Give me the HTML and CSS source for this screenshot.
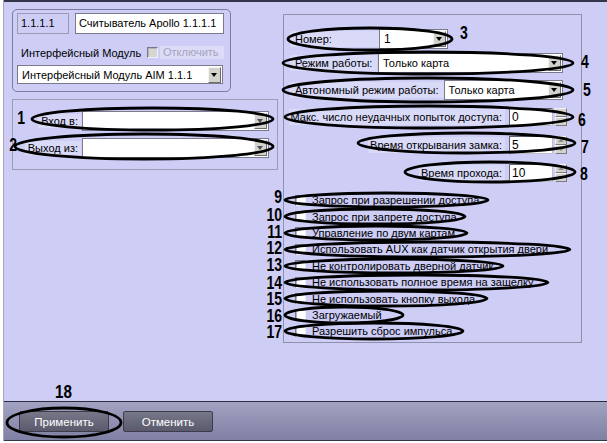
FILE: index.html
```html
<!DOCTYPE html>
<html lang="ru">

<head>
    <meta charset="UTF-8">
    <title>Считыватель Apollo</title>
    <link rel="stylesheet" href="styles.css">
</head>

<body>
    <div class="window">
        <div class="content">
            <div class="left-col">
                <div class="panel reader">
                    <div class="reader-row">
                        <span class="field field-ro">1.1.1.1</span>
                        <span class="field field-name">Считыватель Apollo 1.1.1.1</span>
                    </div>
                    <div class="reader-row module-row">
                        <span class="module-label">Интерфейсный Модуль</span>
                        <span class="check check-off"></span>
                        <span class="disabled-label">Отключить</span>
                    </div>
                    <div class="select module-select">
                        <span class="select-text">Интерфейсный Модуль AIM 1.1.1</span>
                        <span class="drop"></span>
                    </div>
                </div>

                <div class="panel io">
                    <div class="io-row">
                        <span class="io-label"><span class="label-box">Вход в:</span></span>
                        <div class="select io-select"><span class="select-text"></span><span class="drop"></span></div>
                    </div>
                    <div class="io-row">
                        <span class="io-label"><span class="label-box">Выход из:</span></span>
                        <div class="select io-select"><span class="select-text"></span><span class="drop"></span></div>
                    </div>
                </div>
            </div>

            <div class="panel settings">
                <div class="set-row row-number">
                    <span class="label-box number-label">Номер:</span>
                    <div class="select number-select"><span class="select-text">1</span><span class="drop"></span></div>
                </div>
                <div class="set-row row-mode">
                    <span class="label-box">Режим работы:</span>
                    <div class="select mode-select"><span class="select-text">Только карта</span><span class="drop"></span></div>
                </div>
                <div class="set-row row-auto">
                    <span class="label-box">Автономный режим работы:</span>
                    <div class="select auto-select"><span class="select-text">Только карта</span><span class="drop"></span></div>
                </div>

                <div class="num-row row-tries">
                    <span class="label-box">Макс. число неудачных попыток доступа:</span>
                    <span class="spin-field">0</span>
                    <span class="spin"><span class="spin-up"></span><span class="spin-down"></span></span>
                </div>
                <div class="num-row">
                    <span class="label-box">Время открывания замка:</span>
                    <span class="spin-field">5</span>
                    <span class="spin"><span class="spin-up"></span><span class="spin-down"></span></span>
                </div>
                <div class="num-row">
                    <span class="label-box">Время прохода:</span>
                    <span class="spin-field">10</span>
                    <span class="spin"><span class="spin-up"></span><span class="spin-down"></span></span>
                </div>

                <ul class="options">
                    <li><span class="check"></span>Запрос при разрешении доступа</li>
                    <li><span class="check"></span>Запрос при запрете доступа</li>
                    <li><span class="check"></span>Управление по двум картам</li>
                    <li><span class="check"></span>Использовать AUX как датчик открытия двери</li>
                    <li><span class="check"></span>Не контролировать дверной датчик</li>
                    <li><span class="check"></span>Не использовать полное время на защелку</li>
                    <li><span class="check"></span>Не использовать кнопку выхода</li>
                    <li><span class="check"></span>Загружаемый</li>
                    <li><span class="check"></span>Разрешить сброс импульса</li>
                </ul>
            </div>
        </div>

        <div class="footer">
            <button class="btn">Применить</button>
            <button class="btn">Отменить</button>
        </div>
    </div>

    <!-- callout marks drawn over the dialog -->
    <svg class="marks" width="607" height="443" viewBox="0 0 607 443">
        <g class="rings">
            <ellipse cx="152.5" cy="119" rx="120.5" ry="11" />
            <ellipse cx="144" cy="146.5" rx="129" ry="12.5" />
            <ellipse cx="370" cy="39" rx="82" ry="11" />
            <ellipse cx="428" cy="63" rx="145" ry="11" />
            <ellipse cx="428" cy="90" rx="145" ry="12" />
            <ellipse cx="429" cy="117" rx="144" ry="11" />
            <ellipse cx="466.5" cy="143" rx="108.5" ry="10" />
            <ellipse cx="490" cy="172" rx="85" ry="10" />
            <ellipse cx="386.5" cy="200" rx="101.5" ry="7" />
            <ellipse cx="375" cy="216.5" rx="90" ry="7.5" />
            <ellipse cx="376" cy="233" rx="91" ry="7" />
            <ellipse cx="427.5" cy="249.5" rx="142.5" ry="7.5" />
            <ellipse cx="394" cy="266" rx="109" ry="7" />
            <ellipse cx="416.5" cy="282.5" rx="131.5" ry="7.5" />
            <ellipse cx="386" cy="298.5" rx="101" ry="7.5" />
            <ellipse cx="344" cy="315" rx="59" ry="8" />
            <ellipse cx="374" cy="331" rx="89" ry="8" />
            <ellipse cx="64" cy="422.5" rx="57" ry="14.5" />
        </g>
        <g class="nums">
            <text transform="translate(25 124) scale(.78 1)" text-anchor="end">1</text>
            <text transform="translate(17 151) scale(.78 1)" text-anchor="end">2</text>
            <text transform="translate(460 39) scale(.78 1)">3</text>
            <text transform="translate(581 68) scale(.78 1)">4</text>
            <text transform="translate(583 96) scale(.78 1)">5</text>
            <text transform="translate(578 126) scale(.78 1)">6</text>
            <text transform="translate(581 153) scale(.78 1)">7</text>
            <text transform="translate(580 180) scale(.78 1)">8</text>
            <text transform="translate(282 203) scale(.78 1)" text-anchor="end">9</text>
            <text transform="translate(282 221) scale(.78 1)" text-anchor="end">10</text>
            <text transform="translate(282 238) scale(.78 1)" text-anchor="end">11</text>
            <text transform="translate(282 254) scale(.78 1)" text-anchor="end">12</text>
            <text transform="translate(282 271) scale(.78 1)" text-anchor="end">13</text>
            <text transform="translate(282 289) scale(.78 1)" text-anchor="end">14</text>
            <text transform="translate(282 305) scale(.78 1)" text-anchor="end">15</text>
            <text transform="translate(282 322) scale(.78 1)" text-anchor="end">16</text>
            <text transform="translate(282 338) scale(.78 1)" text-anchor="end">17</text>
            <text transform="translate(55 398) scale(.8 1)" class="big">18</text>
        </g>
    </svg>
</body>

</html>
```

FILE: styles.css
```css
* {
    margin: 0;
    padding: 0;
    box-sizing: border-box;
}

body {
    position: relative;
    width: 607px;
    height: 443px;
    overflow: hidden;
    background-color: #fff;
    font-family: "Liberation Sans", Arial, sans-serif;
    font-size: 11px;
    color: #000;
}

.window {
    margin-left: 3px;
    height: 441px;
    border-left: 1px solid #a8a8b4;
    display: flex;
    flex-direction: column;
}

.content {
    height: 401px;
    border-top: 2px solid #34344a;
    background-color: #cdcdf6;
    display: flex;
    padding: 7px 0 0 8px;
}

.left-col {
    width: 266px;
    display: flex;
    flex-direction: column;
    row-gap: 7px;
}

.panel {
    border: 1px solid #9090aa;
}

/* reader card */
.reader {
    width: 219px;
    height: 83px;
    border-color: #7c7c9c;
    border-radius: 5px;
    padding: 3px 0 0 4px;
}

.reader-row {
    display: flex;
    align-items: center;
}

.field {
    height: 21px;
    line-height: 19px;
    padding-left: 3px;
    border: 1px solid #7a7a8c;
    background-color: #fff;
    white-space: nowrap;
    font-size: 11px;
}

.field-ro {
    width: 52px;
    background-color: #cdcdf6;
    border-color: #9a9ab0;
}

.field-name {
    width: 149px;
    margin-left: 6px;
}

.module-row {
    margin-top: 12px;
    height: 13px;
}

.module-label {
    width: 130px;
    padding-left: 4px;
    white-space: nowrap;
}

.check {
    display: inline-block;
    width: 11px;
    height: 11px;
    background-color: #fff;
    border: 1px solid;
    border-color: #78788a #f0f0f8 #f0f0f8 #78788a;
    box-shadow: inset 1px 1px 0 #b4b4c0;
    flex-shrink: 0;
}

.check-off {
    background-color: #d8d6d0;
}

.disabled-label {
    margin-left: 2px;
    width: 64px;
    height: 13px;
    line-height: 13px;
    padding-left: 3px;
    color: #a4a4bc;
    background-color: #dcdcf8;
}

.select {
    display: flex;
    align-items: center;
    height: 20px;
    border: 1px solid #7a7a8c;
    background-color: #fff;
    padding: 1px;
}

.select-text {
    flex: 1;
    padding-left: 3px;
    white-space: nowrap;
    overflow: hidden;
}

.drop {
    position: relative;
    width: 13px;
    height: 16px;
    background-color: #d4d2cc;
    border: 1px solid;
    border-color: #f4f4f4 #6c6c6c #6c6c6c #f4f4f4;
}

.drop::after {
    content: "";
    position: absolute;
    left: 2px;
    top: 5px;
    border-left: 3.5px solid transparent;
    border-right: 3.5px solid transparent;
    border-top: 4px solid #000;
}

.module-select {
    margin-top: 6px;
    width: 206px;
    height: 19px;
}

/* in / out panel */
.io {
    width: 266px;
    height: 71px;
    border-color: #9c9cb4;
    padding-top: 11px;
    display: flex;
    flex-direction: column;
    row-gap: 7px;
}

.io-row {
    display: flex;
    align-items: center;
}

.io-label {
    width: 68px;
    text-align: right;
}

.label-box {
    display: inline-block;
    padding: 1px 3px;
    background-color: #d9d9f8;
    white-space: nowrap;
}

.io-select {
    width: 187px;
    margin-left: 1px;
}

.io-select .drop::after {
    border-top-color: #505058;
}

/* reader settings */
.settings {
    width: 299px;
    height: 329px;
    margin: 5px 0 0 5px;
    padding-top: 14px;
}

.set-row,
.num-row {
    display: flex;
    align-items: center;
    height: 20px;
}

.set-row {
    padding: 0 18px 0 6px;
}

.set-row .label-box {
    padding: 2px 5px;
}

.number-label {
    width: 89px;
}

.number-select {
    width: 69px;
}

.number-select .select-text {
    font-size: 12px;
}

.row-mode {
    margin-top: 4px;
}

.row-auto {
    margin-top: 7px;
}

.mode-select {
    width: 185px;
    margin-left: auto;
}

.auto-select {
    width: 121px;
    margin-left: auto;
}

.num-row {
    justify-content: flex-end;
    padding-right: 14px;
    margin-top: 8px;
}

.row-tries {
    margin-top: 7px;
}

.num-row .label-box {
    padding: 2px 3px 2px 2px;
}

.spin-field {
    width: 44px;
    height: 18px;
    margin-left: 4px;
    border: 1px solid #606070;
    border-right-color: #c0c0c8;
    border-bottom-color: #c0c0c8;
    background-color: #fff;
    padding-left: 2px;
    line-height: 16px;
    font-size: 12px;
}

.spin {
    display: flex;
    flex-direction: column;
    width: 12px;
    height: 18px;
    margin-left: 2px;
}

.spin-up,
.spin-down {
    position: relative;
    flex: 1;
    background-color: #d4d2cc;
    border: 1px solid;
    border-color: #f4f4f4 #7c7c7c #7c7c7c #f4f4f4;
}

.spin-up::after,
.spin-down::after {
    content: "";
    position: absolute;
    left: 2px;
    top: 2px;
    border-left: 3px solid transparent;
    border-right: 3px solid transparent;
}

.spin-up::after {
    border-bottom: 3px solid #8a8a8a;
}

.spin-down::after {
    border-top: 3px solid #8a8a8a;
}

.options {
    list-style: none;
    margin-top: 9px;
    padding-left: 11px;
}

.options li {
    display: flex;
    align-items: center;
    column-gap: 6px;
    height: 16.4px;
    white-space: nowrap;
}

/* bottom button bar */
.footer {
    height: 40px;
    border-top: 1px solid #2c2c3c;
    border-bottom: 1px solid #34344a;
    background: linear-gradient(#a2a2c2, #8080a4);
    padding: 9px 0 0 15px;
    display: flex;
    align-items: flex-start;
    column-gap: 14px;
}

.btn {
    width: 90px;
    height: 21px;
    border: 1px solid #3c3c4c;
    border-radius: 2px;
    background: linear-gradient(#77778a, #5a5a6c);
    color: #fff;
    font-family: "Liberation Sans", Arial, sans-serif;
    font-size: 11.5px;
}

/* callouts */
.marks {
    position: absolute;
    top: 0;
    left: 0;
    pointer-events: none;
}

.rings ellipse {
    fill: none;
    stroke: #000;
    stroke-width: 2.8;
}

.nums text {
    font-family: "Liberation Sans", Arial, sans-serif;
    font-weight: bold;
    font-size: 18px;
    fill: #000;
}

.nums .big {
    font-size: 19px;
}
```
